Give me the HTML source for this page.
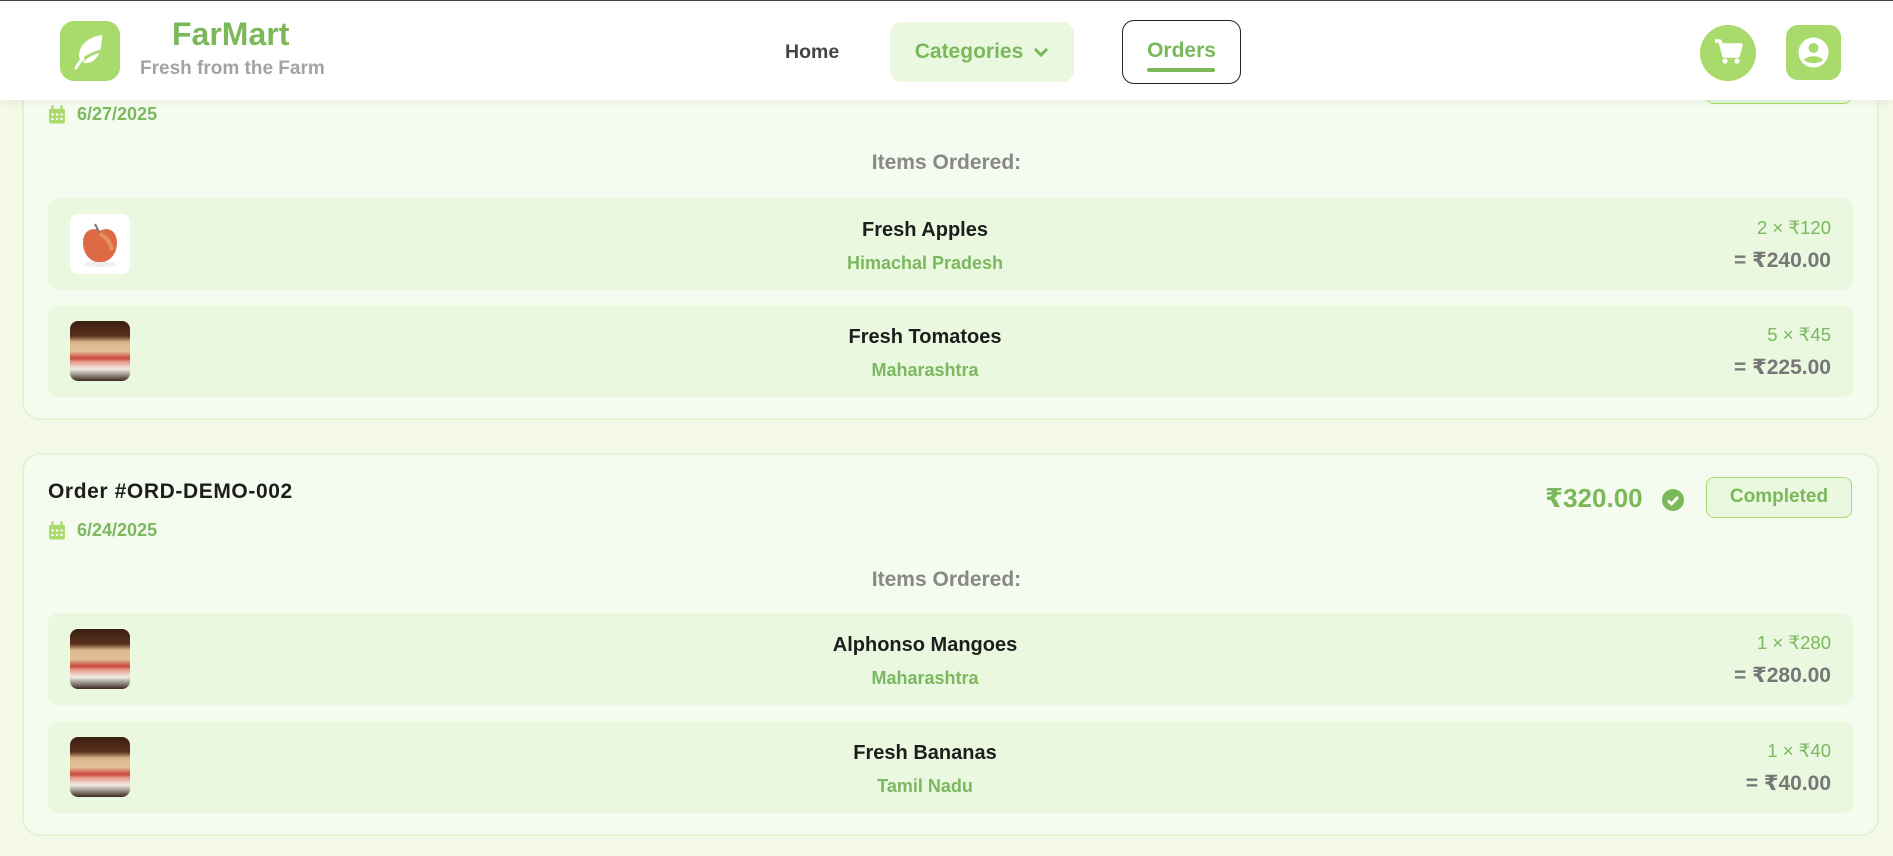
<!DOCTYPE html>
<html><head><meta charset="utf-8">
<style>
*{box-sizing:border-box;margin:0;padding:0}
body{width:1893px;height:856px;overflow:hidden;background:#f4f8e6;font-family:"Segoe UI","Liberation Sans","DejaVu Sans",sans-serif;position:relative}
.abs{position:absolute}
.hdr{left:0;top:0;width:1893px;height:100px;background:#fff;border-top:1px solid #444;box-shadow:0 2px 8px rgba(0,0,0,.06);z-index:5}
.card{left:22px;width:1857px;background:#f5fcef;border:2px solid #e2f3d2;border-radius:18px}
.row{left:48px;width:1805px;height:92px;background:#e9f8df;border-radius:10px}
.thumb{position:absolute;left:22px;top:16px;width:60px;height:60px;border-radius:8px;overflow:hidden}
.name{position:absolute;left:0;width:1754px;text-align:center;top:21px;font-weight:700;font-size:20px;color:#1d1d1d}
.reg{position:absolute;left:0;width:1754px;text-align:center;top:55px;font-weight:600;font-size:18px;color:#7bb860}
.qty{position:absolute;right:22px;top:19px;font-size:18.5px;color:#7bb860;font-weight:500}
.tot{position:absolute;right:22px;top:50px;font-size:21px;color:#777;font-weight:700}
.items{left:0;width:1893px;text-align:center;font-size:21px;font-weight:700;color:#888}
.date{left:48px;font-size:18px;font-weight:700;color:#7bb860;display:flex;align-items:center;gap:11px}
.sand{background:linear-gradient(180deg,#3a1e10 0%,#5a301c 25%,#d9b48a 35%,#e2c39a 50%,#c8463a 62%,#e49a88 68%,#f1efe9 80%,#3c2a20 100%)}
</style></head><body>

<div class="abs hdr">
  <div class="abs" style="left:60px;top:20px;width:60px;height:60px;background:#a8db6b;border-radius:14px">
    <svg width="60" height="60" viewBox="0 0 60 60"><path d="M42 14C30 16 20 22 19 34c0 4 2 8 7 8 10 0 16-10 16-28z" fill="#fff"/><path d="M18 46c4-8 10-12 22-16" stroke="#a8db6b" stroke-width="3" fill="none"/><path d="M16 47c2-4 4-7 7-9" stroke="#fff" stroke-width="3" stroke-linecap="round" fill="none"/></svg>
  </div>
  <div class="abs" style="left:172px;top:15px;font-size:32px;font-weight:700;color:#7ab85a">FarMart</div>
  <div class="abs" style="left:140px;top:57px;font-size:19px;font-weight:600;color:#a3a3a3">Fresh from the Farm</div>
  <div class="abs" style="left:785px;top:40px;font-size:19.5px;font-weight:600;color:#444">Home</div>
  <div class="abs" style="left:890px;top:21px;width:184px;height:60px;background:#e9f8df;border-radius:12px;color:#7ab85a;font-size:21px;font-weight:600;display:flex;align-items:center;justify-content:center;gap:10px">Categories <svg width="16" height="12" viewBox="0 0 16 12"><path d="M2 3l6 6 6-6" stroke="#7ab85a" stroke-width="3" fill="none"/></svg></div>
  <div class="abs" style="left:1122px;top:19px;width:119px;height:64px;border:1.5px solid #222;border-radius:12px;color:#7ab85a;font-size:21px;font-weight:600;text-align:center;padding-top:18px">Orders</div>
  <div class="abs" style="left:1147px;top:67px;width:68px;height:4px;background:#7ab85a;border-radius:2px"></div>
  <div class="abs" style="left:1700px;top:24px;width:56px;height:56px;border-radius:50%;background:#a8db6b">
    <svg width="56" height="56" viewBox="0 0 56 56"><path d="M15 16h5l4 15h14l3-11H22" stroke="#fff" stroke-width="3.5" fill="none" stroke-linejoin="round"/><rect x="22" y="20" width="18" height="10" fill="#fff"/><circle cx="25" cy="36" r="2.6" fill="#fff"/><circle cx="37" cy="36" r="2.6" fill="#fff"/></svg>
  </div>
  <div class="abs" style="left:1786px;top:24px;width:55px;height:55px;border-radius:12px;background:#a8db6b">
    <svg width="55" height="55" viewBox="0 0 55 55"><circle cx="27.5" cy="27.5" r="15" fill="#fff"/><circle cx="27.5" cy="23" r="5" fill="#a8db6b"/><path d="M18 35c3-5 16-5 19 0c-4 4-15 4-19 0z" fill="#a8db6b"/></svg>
  </div>
</div>

<!-- card 1 -->
<div class="abs card" style="top:-60px;height:480px"></div>
<div class="abs" style="left:1706px;top:66px;width:146px;height:38px;border:1.5px solid #a8db6b;border-radius:8px;background:#e9f8df"></div>
<div class="abs date" style="top:104px"><svg width="18" height="20" viewBox="0 0 16 17"><rect x="1" y="3" width="14" height="13" rx="1.5" fill="#a8db6b"/><rect x="3" y="0" width="2" height="4" fill="#a8db6b"/><rect x="11" y="0" width="2" height="4" fill="#a8db6b"/><g fill="#f5fcef"><rect x="3" y="7" width="2" height="2"/><rect x="7" y="7" width="2" height="2"/><rect x="11" y="7" width="2" height="2"/><rect x="3" y="11" width="2" height="2"/><rect x="7" y="11" width="2" height="2"/><rect x="11" y="11" width="2" height="2"/></g></svg>6/27/2025</div>
<div class="abs items" style="top:151px">Items Ordered:</div>
<div class="abs row" style="top:198px">
  <div class="thumb" style="background:#fff"><svg width="60" height="60" viewBox="0 0 60 60"><ellipse cx="30" cy="50" rx="16" ry="3" fill="#eee"/><path d="M30 17c-6-4-17-2-17 12 0 11 8 20 17 19 9 1 17-8 17-19 0-14-11-16-17-12z" fill="#dd6a45"/><path d="M30 20c4 2 10 6 12 16" stroke="#eab070" stroke-width="4" fill="none" opacity=".6"/><path d="M29 18l-4-8" stroke="#777" stroke-width="2"/></svg></div>
  <div class="name">Fresh Apples</div><div class="reg">Himachal Pradesh</div>
  <div class="qty">2 × ₹120</div><div class="tot">= ₹240.00</div>
</div>
<div class="abs row" style="top:305px">
  <div class="thumb sand"></div>
  <div class="name">Fresh Tomatoes</div><div class="reg">Maharashtra</div>
  <div class="qty">5 × ₹45</div><div class="tot">= ₹225.00</div>
</div>

<!-- card 2 -->
<div class="abs card" style="top:453px;height:383px"></div>
<div class="abs" style="left:48px;top:480px;font-size:21px;font-weight:700;color:#1d1d1d;letter-spacing:0.6px">Order #ORD-DEMO-002</div>
<div class="abs date" style="top:520px"><svg width="18" height="20" viewBox="0 0 16 17"><rect x="1" y="3" width="14" height="13" rx="1.5" fill="#a8db6b"/><rect x="3" y="0" width="2" height="4" fill="#a8db6b"/><rect x="11" y="0" width="2" height="4" fill="#a8db6b"/><g fill="#f5fcef"><rect x="3" y="7" width="2" height="2"/><rect x="7" y="7" width="2" height="2"/><rect x="11" y="7" width="2" height="2"/><rect x="3" y="11" width="2" height="2"/><rect x="7" y="11" width="2" height="2"/><rect x="11" y="11" width="2" height="2"/></g></svg>6/24/2025</div>
<div class="abs" style="left:1545px;top:483px;font-size:26px;font-weight:700;color:#7ab85a">₹320.00</div>
<div class="abs" style="left:1662px;top:489px"><svg width="22" height="22" viewBox="0 0 22 22"><circle cx="11" cy="11" r="11" fill="#7ab85a"/><path d="M6 11.5l3.5 3.5 6.5-7" stroke="#fff" stroke-width="2.8" fill="none"/></svg></div>
<div class="abs" style="left:1706px;top:477px;width:146px;height:41px;border:1.5px solid #a8db6b;border-radius:8px;background:#e9f8df;color:#7ab85a;font-size:19px;font-weight:700;text-align:center;line-height:38px">Completed</div>
<div class="abs items" style="top:568px">Items Ordered:</div>
<div class="abs row" style="top:613px">
  <div class="thumb sand"></div>
  <div class="name">Alphonso Mangoes</div><div class="reg">Maharashtra</div>
  <div class="qty">1 × ₹280</div><div class="tot">= ₹280.00</div>
</div>
<div class="abs row" style="top:721px">
  <div class="thumb sand"></div>
  <div class="name">Fresh Bananas</div><div class="reg">Tamil Nadu</div>
  <div class="qty">1 × ₹40</div><div class="tot">= ₹40.00</div>
</div>
</body></html>
